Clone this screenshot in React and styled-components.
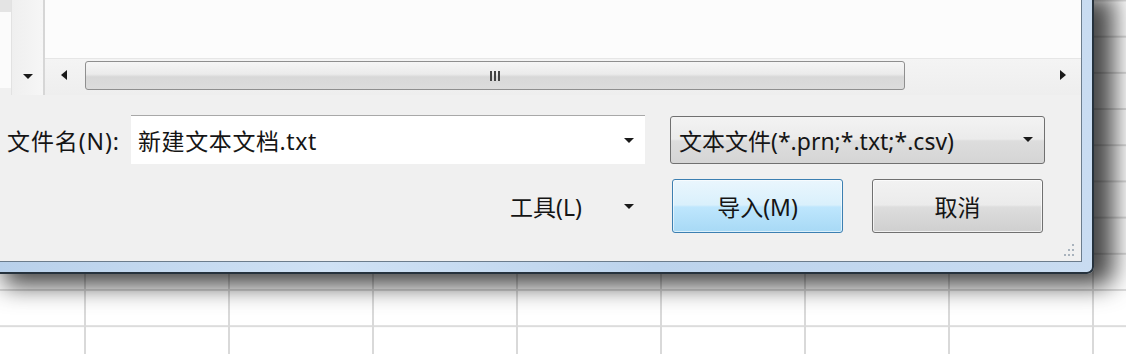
import React from "react";
import styled, { createGlobalStyle } from "styled-components";

const Global = createGlobalStyle`
  html, body {
    margin: 0;
    padding: 0;
  }
  body {
    width: 1126px;
    height: 354px;
    overflow: hidden;
    background-color: #fff;
    background-image:
      linear-gradient(to right, #d9d9d9 0, #d9d9d9 2px, transparent 2px),
      linear-gradient(to bottom, #dcdcdc 0, #dcdcdc 2px, transparent 2px);
    background-size: 144px 100%, 100% 36.2px;
    background-position: 84px 0, 0 -0.5px;
    font-family: "Noto Sans", "Noto Sans CJK SC", sans-serif;
  }
`;

const Frame = styled.div`
  width: 1082px;
  height: 262px;
  padding: 0 10px 10px 0;
  border-right: 2px solid #26323d;
  border-bottom: 2px solid #26323d;
  border-bottom-right-radius: 7px;
  background: linear-gradient(90deg, #b8d0ea 0%, #cfe1f4 30%, #bcd3ec 60%, #c9dcf1 100%);
  box-shadow: 12px 4px 24px 8px rgba(0, 0, 0, 0.72);
`;

const Client = styled.div`
  width: 1081px;
  height: 261px;
  border-right: 1px solid #6b7c8c;
  border-bottom: 1px solid #6b7c8c;
  background: #f0f0f0;
  display: flex;
  flex-direction: column;
`;

const TopRow = styled.div`
  display: flex;
  height: 95px;
`;

const NavPane = styled.div`
  width: 43px;
  display: flex;
`;

const NavEdge = styled.div`
  width: 11px;
  background: linear-gradient(to bottom, #e4e4e4 0, #e4e4e4 12px, #fbfbfb 12px, #fbfbfb 88px, #f0f0f0 88px);
  border-right: 1px solid #e2e2e2;
`;

const VTrack = styled.div`
  flex: 1;
  display: flex;
  flex-direction: column;
  justify-content: flex-end;
  align-items: center;
  padding-bottom: 16px;
  background: linear-gradient(to right, #efefef, #f6f6f6);
`;

const Splitter = styled.div`
  width: 2px;
  background: #d6d6d6;
`;

const Browser = styled.div`
  flex: 1;
  display: flex;
  flex-direction: column;
`;

const FileList = styled.div`
  height: 58px;
  background: #fcfcfc;
`;

const HScroll = styled.div`
  flex: 1;
  display: flex;
  align-items: flex-start;
  padding-top: 2px;
  background: linear-gradient(to bottom, #f4f4f4, #eeeeee);
  border-top: 1px solid #e6e6e6;
`;

const ScrollBtn = styled.div`
  width: ${(p) => p.$w}px;
  height: 28px;
  display: flex;
  align-items: center;
  justify-content: center;
`;

const Thumb = styled.div`
  width: 818px;
  height: 27px;
  margin-left: 2px;
  border: 1px solid #8f8f8f;
  border-radius: 3px;
  background: linear-gradient(to bottom, #f6f6f6 0%, #ebebeb 45%, #d8d8d8 55%, #dcdcdc 100%);
  display: flex;
  align-items: center;
  justify-content: center;
`;

const Track = styled.div`
  flex: 1;
`;

const Form = styled.div`
  flex: 1;
  display: flex;
  flex-direction: column;
  padding-top: 20px;
`;

const Row = styled.div`
  display: flex;
  align-items: center;
  height: ${(p) => p.$h}px;
`;

const Label = styled.span`
  width: 131px;
  padding-left: 7px;
  box-sizing: border-box;
  font-size: 23px;
  letter-spacing: 0.9px;
  color: #151515;
  white-space: nowrap;
`;

const Combo = styled.div`
  width: 514px;
  height: 49px;
  box-sizing: border-box;
  background: #fff;
  border-top: 1px solid #a8a8a8;
  display: flex;
  align-items: center;
  padding: 0 11px 0 7px;
  font-size: 23px;
  letter-spacing: ${(p) => p.$ls || 0}px;
  color: #151515;
`;

const ComboText = styled.span`
  flex: 1;
  white-space: nowrap;
`;

const Filter = styled.div`
  width: 375px;
  height: 48px;
  margin-left: 25px;
  box-sizing: border-box;
  border: 1px solid #707070;
  border-radius: 3px;
  background: linear-gradient(to bottom, #f3f3f3 0%, #ebebeb 48%, #dddddd 52%, #d5d5d5 100%);
  display: flex;
  align-items: center;
  padding: 0 11px 0 8px;
  font-size: 23px;
  color: #151515;
`;

const Actions = styled.div`
  display: flex;
  align-items: center;
  height: 54px;
  margin-top: 15px;
  padding-left: 510px;
`;

const Tools = styled.span`
  display: inline-block;
  width: 76px;
  font-size: 23px;
  color: #151515;
  white-space: nowrap;
`;

const ToolsArrow = styled.span`
  display: flex;
  margin-left: 38px;
  margin-right: 38px;
`;

const Button = styled.button`
  width: 171px;
  height: 54px;
  margin-right: 29px;
  border: 1px solid ${(p) => (p.$primary ? "#3c7fb1" : "#707070")};
  border-radius: 3px;
  background: ${(p) =>
    p.$primary
      ? "linear-gradient(to bottom, #eaf6fd 0%, #d9f0fc 48%, #bee6fd 52%, #a7d9f5 100%)"
      : "linear-gradient(to bottom, #f2f2f2 0%, #ebebeb 48%, #dddddd 52%, #cfcfcf 100%)"};
  box-shadow: inset 0 0 0 1px ${(p) => (p.$primary ? "rgba(255,255,255,0.6)" : "rgba(255,255,255,0.7)")};
  font-family: "Noto Sans", "Noto Sans CJK SC", sans-serif;
  font-size: 23px;
  color: #151515;
  padding: 0;
`;

const GripRow = styled.div`
  flex: 1;
  display: flex;
  justify-content: flex-end;
  align-items: flex-end;
  padding: 0 6px 4px 0;
`;

function Tri({ dir }) {
  const pts = {
    down: "0,0 10,0 5,5",
    left: "6,0 6,10 0,5",
    right: "0,0 0,10 6,5",
  }[dir];
  const size = dir === "down" ? [10, 5] : [6, 10];
  return (
    <svg width={size[0]} height={size[1]} viewBox={`0 0 ${size[0]} ${size[1]}`}>
      <polygon points={pts} fill="#1a1a1a" />
    </svg>
  );
}

function Grip() {
  return (
    <svg width="12" height="14" viewBox="0 0 12 14">
      <g fill="#a9b3bd">
        <rect x="9" y="1" width="2" height="2" />
        <rect x="9" y="6" width="2" height="2" />
        <rect x="5" y="6" width="2" height="2" />
        <rect x="9" y="11" width="2" height="2" />
        <rect x="5" y="11" width="2" height="2" />
        <rect x="1" y="11" width="2" height="2" />
      </g>
    </svg>
  );
}

function GripLines() {
  return (
    <svg width="12" height="10" viewBox="0 0 12 10">
      <g fill="#444">
        <rect x="1" y="0" width="2" height="10" />
        <rect x="5" y="0" width="2" height="10" />
        <rect x="9" y="0" width="2" height="10" />
      </g>
    </svg>
  );
}

export default function App() {
  return (
    <>
      <Global />
      <Frame>
        <Client>
          <TopRow>
            <NavPane>
              <NavEdge />
              <VTrack>
                <Tri dir="down" />
              </VTrack>
            </NavPane>
            <Splitter />
            <Browser>
              <FileList />
              <HScroll>
                <ScrollBtn $w={38}>
                  <Tri dir="left" />
                </ScrollBtn>
                <Thumb>
                  <GripLines />
                </Thumb>
                <Track />
                <ScrollBtn $w={36}>
                  <Tri dir="right" />
                </ScrollBtn>
              </HScroll>
            </Browser>
          </TopRow>
          <Form>
            <Row $h={49}>
              <Label>文件名(N):</Label>
              <Combo $ls={0.6}>
                <ComboText>新建文本文档.txt</ComboText>
                <Tri dir="down" />
              </Combo>
              <Filter>
                <ComboText>文本文件(*.prn;*.txt;*.csv)</ComboText>
                <Tri dir="down" />
              </Filter>
            </Row>
            <Actions>
              <Tools>工具(L)</Tools>
              <ToolsArrow>
                <Tri dir="down" />
              </ToolsArrow>
              <Button $primary>导入(M)</Button>
              <Button>取消</Button>
            </Actions>
            <GripRow>
              <Grip />
            </GripRow>
          </Form>
        </Client>
      </Frame>
    </>
  );
}
